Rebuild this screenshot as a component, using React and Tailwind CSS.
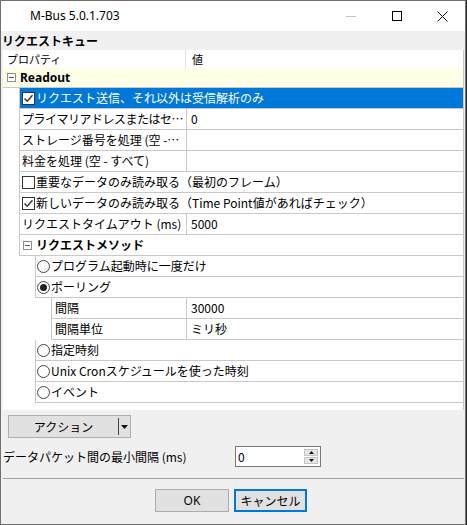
const jp = "font-['Noto_Sans_CJK_JP',sans-serif]"

const Check = ({ checked }) => (
  <span className="w-[13px] h-[13px] border border-[#333] bg-white flex items-center justify-center shrink-0">
    {checked && (
      <svg width="11" height="11" viewBox="0 0 11 11">
        <path d="M1.5 5.5 L4.2 8.2 L9.5 2.2" stroke="#333" strokeWidth="1.4" fill="none" />
      </svg>
    )}
  </span>
)

const Radio = ({ checked }) => (
  <span className="w-[13px] h-[13px] rounded-full border border-[#444] bg-white flex items-center justify-center shrink-0">
    {checked && <span className="w-[7px] h-[7px] rounded-full bg-[#222]" />}
  </span>
)

const MinusBox = () => (
  <span className="w-[9px] h-[9px] border border-[#8e8e8e] bg-white flex items-center justify-center shrink-0">
    <span className="w-[5px] h-px bg-[#3c5a8a]" />
  </span>
)

const Row = ({ indent, value, selected, children, textPad = 'pl-[2px]' }) => (
  <div className="flex h-[21px]">
    <div className={`${indent} shrink-0`} />
    <div
      className={`flex flex-1 min-w-0 border-l border-b border-[#c9c9c9] ${
        selected ? 'bg-[#0078d7] text-white' : ''
      }`}
    >
      <div className={`flex flex-1 min-w-0 items-center gap-px ${textPad} whitespace-nowrap overflow-hidden`}>
        {children}
      </div>
      {value !== undefined && (
        <div className="w-[277px] shrink-0 border-l border-[#c9c9c9] pl-[4px] flex items-center">{value}</div>
      )}
    </div>
  </div>
)

const App = () => {
  return (
    <div className="w-[467px] h-[525px] bg-[#2b2b2b]">
      <div className={`w-[466px] h-[525px] border border-[#707070] bg-[#f0f0f0] flex flex-col text-black ${jp}`}>
        {/* title bar */}
        <div className="h-[30px] bg-white flex items-center shrink-0">
          <div className="flex-1 pl-[29px] text-[12px] font-['Noto_Sans',sans-serif]">M-Bus 5.0.1.703</div>
          <div className="w-[46px] h-full flex items-center justify-center">
            <span className="w-[10px] h-px bg-[#c4c4c4]" />
          </div>
          <div className="w-[46px] h-full flex items-center justify-center">
            <span className="w-[10px] h-[10px] border border-black" />
          </div>
          <div className="w-[45px] h-full flex items-center justify-center">
            <svg width="11" height="11" viewBox="0 0 11 11">
              <path d="M0.5 0.5 L10.5 10.5 M10.5 0.5 L0.5 10.5" stroke="#111" strokeWidth="1" />
            </svg>
          </div>
        </div>

        {/* section header */}
        <div className="h-[19px] flex items-center pl-px text-[12px] font-bold shrink-0">リクエストキュー</div>

        {/* property grid */}
        <div className="ml-[2px] w-[461px] bg-white border-r border-[#c9c9c9] flex flex-col text-[12px] leading-none pb-[7px]">
          <div className="h-[18px] flex text-[11px]">
            <div className="w-[183px] border-r border-[#e3e3e3] pl-[4px] flex items-center">プロパティ</div>
            <div className="flex-1 pl-[6px] flex items-center">値</div>
          </div>

          <div className="h-[20px] bg-[#ffffe8] border-b border-[#c9c9c9] flex items-center pl-[4px] gap-[4px]">
            <MinusBox />
            <span className="font-bold text-[12px] font-['Noto_Sans',sans-serif]">Readout</span>
          </div>

          <Row indent="w-[16px]" selected>
            <Check checked />
            <span>リクエスト送信、それ以外は受信解析のみ</span>
          </Row>
          <Row indent="w-[16px]" value="0">
            <span className="tracking-[-0.5px]">プライマリアドレスまたはセ…</span>
          </Row>
          <Row indent="w-[16px]" value="">
            ストレージ番号を処理 (空 -…
          </Row>
          <Row indent="w-[16px]" value="">
            料金を処理 (空 - すべて)
          </Row>
          <Row indent="w-[16px]">
            <Check />
            <span>重要なデータのみ読み取る（最初のフレーム）</span>
          </Row>
          <Row indent="w-[16px]">
            <Check checked />
            <span>新しいデータのみ読み取る（Time Point値があればチェック）</span>
          </Row>
          <Row indent="w-[16px]" value="5000">
            リクエストタイムアウト (ms)
          </Row>
          <Row indent="w-[16px]" textPad="pl-[3px]">
            <MinusBox />
            <span className="font-bold ml-[3px]">リクエストメソッド</span>
          </Row>
          <Row indent="w-[32px]" textPad="pl-px">
            <Radio />
            <span>プログラム起動時に一度だけ</span>
          </Row>
          <Row indent="w-[32px]" textPad="pl-px">
            <Radio checked />
            <span>ポーリング</span>
          </Row>
          <Row indent="w-[48px]" value="30000" textPad="pl-[3px]">
            間隔
          </Row>
          <Row indent="w-[48px]" value="ミリ秒" textPad="pl-[3px]">
            間隔単位
          </Row>
          <Row indent="w-[32px]" textPad="pl-px">
            <Radio />
            <span>指定時刻</span>
          </Row>
          <Row indent="w-[32px]" textPad="pl-px">
            <Radio />
            <span>Unix Cronスケジュールを使った時刻</span>
          </Row>
          <Row indent="w-[32px]" textPad="pl-px">
            <Radio />
            <span>イベント</span>
          </Row>
        </div>

        {/* action button */}
        <div className="ml-[7px] mt-[5px] w-[123px] h-[23px] bg-[#e1e1e1] border border-[#adadad] flex text-[12px]">
          <div className="flex-1 flex items-center justify-center">アクション</div>
          <div className="w-px my-[2px] bg-[#444]" />
          <div className="w-[11px] flex items-center justify-center">
            <svg width="7" height="4" viewBox="0 0 7 4">
              <path d="M0 0 L7 0 L3.5 4 Z" fill="#111" />
            </svg>
          </div>
        </div>

        {/* min interval */}
        <div className="mt-[8px] h-[21px] flex items-center text-[12px]">
          <div className="w-[234px] pl-[2px]">データパケット間の最小間隔 (ms)</div>
          <div className="w-[86px] h-[21px] bg-white border border-[#7a7a7a] flex items-center">
            <span className="flex-1 pl-[2px]">0</span>
            <div className="w-[14px] mr-[2px] flex flex-col gap-px">
              <div className="h-[7px] bg-[#e6e6e6] border border-[#c4c4c4] flex items-center justify-center">
                <svg width="5" height="3" viewBox="0 0 5 3">
                  <path d="M0 3 L5 3 L2.5 0 Z" fill="#111" />
                </svg>
              </div>
              <div className="h-[7px] bg-[#e6e6e6] border border-[#c4c4c4] flex items-center justify-center">
                <svg width="5" height="3" viewBox="0 0 5 3">
                  <path d="M0 0 L5 0 L2.5 3 Z" fill="#111" />
                </svg>
              </div>
            </div>
          </div>
        </div>

        {/* separator */}
        <div className="mt-[11px] ml-[2px] w-[461px] h-px bg-[#a0a0a0]" />

        {/* dialog buttons */}
        <div className="mt-[10px] ml-[154px] flex gap-[5px] text-[12px]">
          <div className="w-[74px] h-[23px] bg-[#e1e1e1] border border-[#adadad] flex items-center justify-center font-['Noto_Sans',sans-serif]">
            OK
          </div>
          <div className="w-[73px] h-[23px] bg-[#e1e1e1] border-2 border-[#0078d7] flex items-center justify-center">
            キャンセル
          </div>
        </div>
      </div>
    </div>
  )
}

export default App
